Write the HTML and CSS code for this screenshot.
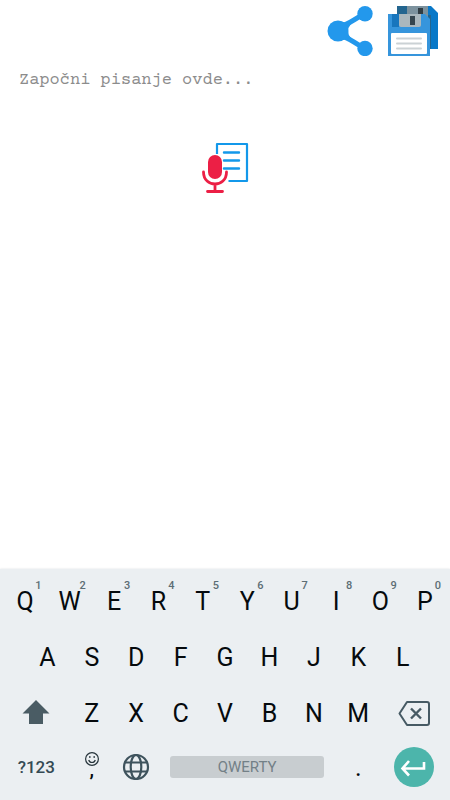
FILE: index.html
```html
<!DOCTYPE html>
<html lang="sr-Latn">
<head>
<meta charset="utf-8">
<meta name="viewport" content="width=device-width, initial-scale=1">
<title>Beleške</title>
<link rel="stylesheet" href="styles.css">
</head>
<body>
<header class="toolbar">
  <button class="tool" type="button" aria-label="Podeli">
    <svg class="icon-large" viewBox="0 0 50 50" fill="#2398ec">
      <path d="M11 21C23 19 25 15 38 8M11 29C23 31 25 35 38 42" fill="none" stroke="#2398ec" stroke-width="5"/>
      <path d="M17 16L25 18Q19 25 25 32L17 34Z"/>
      <circle cx="12" cy="25" r="10.500"/><circle cx="39" cy="7.700" r="7.700"/><circle cx="39" cy="42.500" r="7.700"/>
    </svg>
  </button>
  <button class="tool" type="button" aria-label="Sačuvaj">
    <svg class="icon-large" viewBox="0 0 50 50">
      <path fill="#0878c8" d="M9 0H43L50 7V43H9Z"/>
      <path fill="#23658f" d="M9 0H19V10H9ZM40 9H43V43H40Z"/>
      <path fill="#7c929e" d="M19 0H40V12H19Z"/>
      <path fill="#303c43" d="M30 2H35V8H30Z"/>
      <path fill="#3695dc" d="M0 8H37L42 13V50H0Z"/>
      <path fill="#1876bd" d="M4 8H11V21H4Z"/>
      <path fill="#aab7bd" d="M11 8H33V19Q33 21 31 21H13Q11 21 11 19Z"/>
      <path fill="#35454e" d="M22 10H27V19H22Z"/>
      <rect x="3" y="27" width="36" height="21" rx="1" fill="#fff"/>
      <path stroke="#cbd2d5" stroke-width="2" stroke-linecap="round" d="M9 32.500H33M9 37.500H33M9 42.500H33"/>
    </svg>
  </button>
</header>
<main class="editor">
  <textarea class="note" rows="1" aria-label="Tekst beleške" placeholder="Započni pisanje ovde..."></textarea>
  <button class="tool dictate" type="button" aria-label="Diktiraj">
    <svg class="icon-dictate" viewBox="0 0 48 52" fill="none">
      <path stroke="#1398ea" stroke-width="2.200" stroke-linejoin="round" d="M16 12V2H46V39H27.500"/>
      <path stroke="#1398ea" stroke-width="2.400" stroke-linecap="round" d="M23 10.500H38M23 18.500H38M23 26.500H38"/>
      <rect x="7" y="13" width="14" height="24" rx="7" fill="#ec1f45"/>
      <path stroke="#ec1f45" stroke-width="2.800" stroke-linecap="round" d="M2.500 30C2.500 46 25.500 46 25.500 30M14 42V49M6.500 49.500H21.500"/>
    </svg>
  </button>
</main>
<section class="keyboard" aria-label="Tastatura">
  <div class="row">
    <button class="key" type="button">Q<span class="hint">1</span></button>
    <button class="key" type="button">W<span class="hint">2</span></button>
    <button class="key" type="button">E<span class="hint">3</span></button>
    <button class="key" type="button">R<span class="hint">4</span></button>
    <button class="key" type="button">T<span class="hint">5</span></button>
    <button class="key" type="button">Y<span class="hint">6</span></button>
    <button class="key" type="button">U<span class="hint">7</span></button>
    <button class="key" type="button">I<span class="hint">8</span></button>
    <button class="key" type="button">O<span class="hint">9</span></button>
    <button class="key" type="button">P<span class="hint">0</span></button>
  </div>
  <div class="row row-home">
    <button class="key" type="button">A</button>
    <button class="key" type="button">S</button>
    <button class="key" type="button">D</button>
    <button class="key" type="button">F</button>
    <button class="key" type="button">G</button>
    <button class="key" type="button">H</button>
    <button class="key" type="button">J</button>
    <button class="key" type="button">K</button>
    <button class="key" type="button">L</button>
  </div>
  <div class="row">
    <button class="key key-wide" type="button" aria-label="Shift">
      <svg class="icon-key" viewBox="0 0 32 32" fill="#4a5c64"><path d="M16 3L29.500 16.500H23V27H9V16.500H2.500Z"/></svg>
    </button>
    <button class="key" type="button">Z</button>
    <button class="key" type="button">X</button>
    <button class="key" type="button">C</button>
    <button class="key" type="button">V</button>
    <button class="key" type="button">B</button>
    <button class="key" type="button">N</button>
    <button class="key" type="button">M</button>
    <button class="key key-wide" type="button" aria-label="Obriši">
      <svg class="icon-key" viewBox="0 0 32 32" fill="none" stroke="#465a64" stroke-width="2"><path stroke-linejoin="round" d="M9 5H29Q31 5 31 7V26Q31 28 29 28H9L1.500 16.500Z"/><path stroke-width="2.400" d="M13 11.500L23 21.500M23 11.500L13 21.500"/></svg>
    </button>
  </div>
  <div class="row row-bottom">
    <button class="key key-wide key-symbols" type="button">?123</button>
    <button class="key key-comma" type="button" aria-label="Zarez, emotikoni">
      <svg class="icon-smile" viewBox="0 0 16 16" fill="none" stroke="#26343b" stroke-width="1.200"><circle cx="8" cy="8" r="6.400"/><path d="M4.700 9Q5.500 11.500 8 11.500T11.300 9"/><path stroke-width="1.600" d="M5 6H6.600M9.400 6H11"/></svg>
      <span class="comma">,</span>
    </button>
    <button class="key" type="button" aria-label="Jezik">
      <svg class="icon-globe" viewBox="0 0 28 28" fill="none" stroke="#3e535d" stroke-width="2.200"><circle cx="14" cy="14" r="12"/><ellipse cx="14" cy="14" rx="5.300" ry="12"/><path d="M3 9.500H25M3 18.500H25"/></svg>
    </button>
    <button class="key key-space" type="button"><span class="space-bar">QWERTY</span></button>
    <button class="key" type="button">.</button>
    <button class="key key-wide" type="button" aria-label="Enter">
      <svg class="icon-enter" viewBox="0 0 40 40" fill="none"><circle cx="20" cy="20" r="20" fill="#4cb5ab"/><path stroke="#fff" stroke-width="2.600" d="M30 15V21.500H9M15 14L8.500 21.500L15 28.500"/></svg>
    </button>
  </div>
</section>
</body>
</html>
```

FILE: styles.css
```css
* {
  box-sizing: border-box;
}

body {
  display: flex;
  flex-direction: column;
  min-height: 100vh;
  margin: 0;
  background: #fff;
  font-family: Roboto, "Liberation Sans", sans-serif;
}

button {
  margin: 0;
  padding: 0;
  border: 0;
  background: none;
  color: inherit;
  font: inherit;
}

svg {
  display: block;
  flex: none;
}

.toolbar {
  display: flex;
  justify-content: flex-end;
  gap: 12px;
  padding: 6px 12px 13px;
}

.icon-large {
  width: 50px;
  height: 50px;
}

.editor {
  display: flex;
  flex: 1;
  flex-direction: column;
  align-items: center;
  gap: 49px;
}

.note {
  width: 100%;
  height: 24px;
  padding: 0 19px;
  border: 0;
  outline: 0;
  overflow: hidden;
  resize: none;
  background: none;
  color: #333;
  font: 17px/24px "Courier Prime", "Courier New", "Liberation Mono", monospace;
}

.note::placeholder {
  color: #8c8c8c;
  opacity: 1;
}

.icon-dictate {
  width: 48px;
  height: 52px;
}

.keyboard {
  padding: 4px 3px 7px;
  background: #ebeff2;
  box-shadow: 0 0 2px #dde0e2;
  color: #050a0d;
  font-size: 25px;
}

.row {
  display: flex;
  height: 56px;
}

.row-home {
  padding: 0 5%;
}

.row-bottom {
  height: 52px;
}

.key {
  position: relative;
  display: flex;
  flex: 2 1 0;
  align-items: center;
  justify-content: center;
  min-width: 0;
}

.key-wide {
  flex-grow: 3;
}

.hint {
  position: absolute;
  top: 7px;
  right: 6px;
  color: #5c6d75;
  font-size: 11px;
  font-weight: 500;
  line-height: 12px;
}

.icon-key {
  width: 32px;
  height: 32px;
}

.key-symbols {
  color: #344a54;
  font-size: 17px;
  font-weight: 500;
}

.key-comma {
  flex-direction: column;
}

.icon-smile {
  width: 16px;
  height: 16px;
}

.comma {
  height: 16px;
  font-size: 20px;
  font-weight: 500;
  line-height: 4px;
}

.icon-globe {
  width: 28px;
  height: 28px;
}

.key-space {
  flex-grow: 8;
}

.space-bar {
  flex: 1;
  margin: 0 12px;
  border-radius: 3px;
  background: #c8cdd0;
  color: #738087;
  font-size: 15px;
  line-height: 22px;
}

.icon-enter {
  width: 40px;
  height: 40px;
}
```
